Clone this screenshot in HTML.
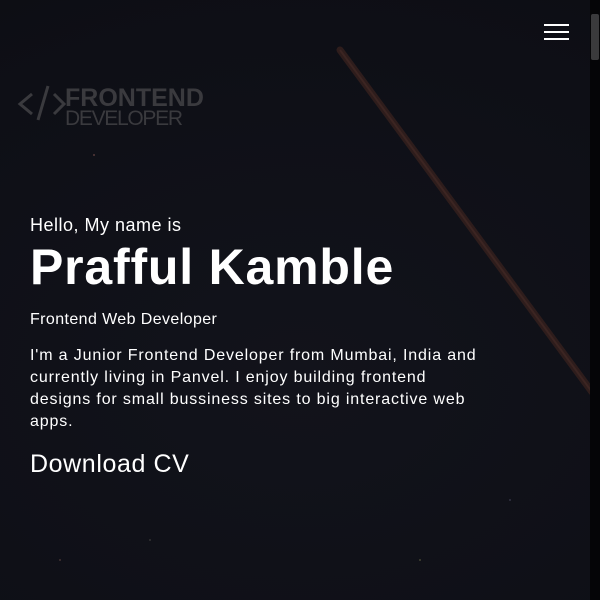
<!DOCTYPE html>
<html><head><meta charset="utf-8"><style>
html,body{margin:0;padding:0;width:600px;height:600px;overflow:hidden;background:#0f1018;font-family:"Liberation Sans",sans-serif;color:#fff}
.bg{position:absolute;inset:0;background:radial-gradient(ellipse 700px 500px at 300px 380px,#12131b 0%,#0e0f16 70%,#0c0d13 100%)}
.sb{position:absolute;right:0;top:0;width:10px;height:600px;background:#050507}
.sb i{position:absolute;left:1px;top:14px;width:8px;height:46px;background:#3a3a3c;border-radius:2px}
.t{position:absolute;left:30px;white-space:nowrap}
.hb{position:absolute;left:544px;top:24px;width:25px}
.hb div{height:2px;background:#fff;margin-bottom:5px}
</style></head><body>
<div class="bg"></div>
<svg width="600" height="600" style="position:absolute;left:0;top:0">
<line x1="340" y1="50" x2="592" y2="392" stroke="#2e1d1c" stroke-width="7" stroke-linecap="round"/>
<line x1="340" y1="50" x2="592" y2="392" stroke="#3c2522" stroke-width="2"/>
<g font-family="Liberation Sans">
<text x="65" y="106" font-size="25" font-weight="bold" fill="#3a3a3e">FRONTEND</text>
<text x="65" y="125" font-size="21" fill="#3a3a3e" textLength="118">DEVELOPER</text>
</g>
<g stroke="#3a3a3e" stroke-width="3" fill="none">
<path d="M32 94 L20 104 L32 114"/><path d="M48 86 L38 120"/><path d="M54 94 L64 104 L54 114"/>
</g>
<g>
<circle cx="94" cy="155" r="1" fill="#553a3a"/><circle cx="213" cy="268" r="1" fill="#4a3a2a"/><circle cx="150" cy="540" r="1" fill="#333"/><circle cx="420" cy="560" r="1" fill="#443"/><circle cx="510" cy="500" r="1" fill="#334"/><circle cx="60" cy="560" r="1" fill="#433"/>
</g>
</svg>
<div class="hb"><div></div><div></div><div></div></div>
<div class="t" style="top:215px;font-size:18px;letter-spacing:0.5px">Hello, My name is</div>
<div class="t" style="top:238px;font-size:50px;font-weight:bold;letter-spacing:0.8px">Prafful Kamble</div>
<div class="t" style="top:311px;font-size:16px;letter-spacing:0.4px">Frontend Web Developer</div>
<div class="t" style="top:345px;font-size:16px;line-height:22px;letter-spacing:0.85px">I'm a Junior Frontend Developer from Mumbai, India and<br>currently living in Panvel. I enjoy building frontend<br>designs for small bussiness sites to big interactive web<br>apps.</div>
<div class="t" style="top:450px;font-size:25px;letter-spacing:0.6px">Download CV</div>
<div class="sb"><i></i></div>
</body></html>
